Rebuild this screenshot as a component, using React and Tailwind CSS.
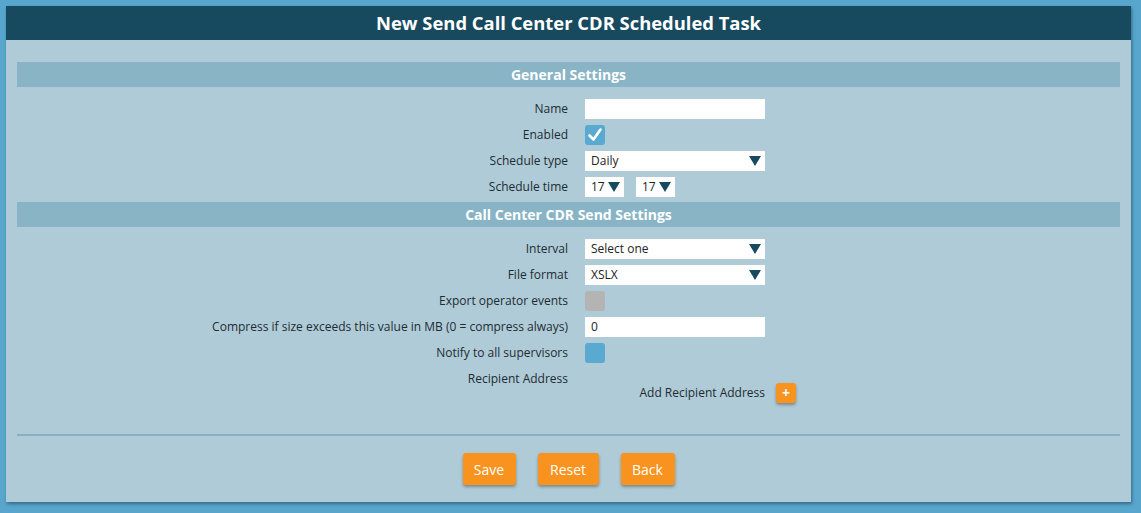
import React from "react";

const F = { fontFamily: '"Open Sans", "Noto Sans", sans-serif' };

function Arrow() {
  return (
    <svg width="12" height="10" viewBox="0 0 12 10" className="shrink-0">
      <polygon points="0,0 12,0 6,10" fill="#174a5e" />
    </svg>
  );
}

function Row({ label, children, h = "h-[26px]" }) {
  return (
    <div className={`grid grid-cols-[551px_1fr] ${h} items-center`}>
      <div className="text-right text-[12px] text-[#1e2b33] leading-none">{label}</div>
      <div className="pl-[17px] flex items-center">{children}</div>
    </div>
  );
}

function Input({ value = "" }) {
  return (
    <div className="w-[180px] h-[20px] bg-white text-[12px] text-[#222] flex items-center px-[6px]">{value}</div>
  );
}

function Select({ value, w = "w-[180px]" }) {
  return (
    <div className={`${w} h-[20px] bg-white text-[12px] text-[#222] flex items-center justify-between pl-[6px] pr-[4px] overflow-hidden`}>
      <span>{value}</span>
      <Arrow />
    </div>
  );
}

function Check({ checked, color = "bg-[#5aa9d0]" }) {
  return (
    <div className={`w-[20px] h-[20px] rounded-[3px] ${color} flex items-center justify-center`}>
      {checked && (
        <svg width="16" height="16" viewBox="0 0 16 16">
          <path d="M2.5 8.5 L6.5 12.5 L13.5 2.5" stroke="white" strokeWidth="2.6" fill="none" strokeLinecap="round" strokeLinejoin="round" />
        </svg>
      )}
    </div>
  );
}

function Bar({ children }) {
  return (
    <div className="h-[25px] bg-[#88b4c6] flex items-center justify-center text-white font-bold text-[14px]">{children}</div>
  );
}

function Btn({ children, w }) {
  return (
    <button className={`${w} h-[32px] rounded-[3px] bg-[#f7931e] text-white text-[14px] shadow-[0_2px_3px_rgba(60,60,60,0.45)]`}>{children}</button>
  );
}

export default function App() {
  return (
    <div className="w-[1141px] h-[513px] bg-[#58a6cd] p-[6px] pb-0" style={F}>
      <div className="w-[1125px] h-[496px] bg-[#afcbd7] shadow-[1px_2px_3px_rgba(20,50,70,0.5)] flex flex-col">
        <div className="h-[34px] bg-[#174a5e] flex items-center justify-center text-white font-bold text-[18.4px]">
          New Send Call Center CDR Scheduled Task
        </div>
        <div className="px-[11px] pt-[22px] flex flex-col">
          <Bar>General Settings</Bar>
          <div className="pt-[9px]">
            <Row label="Name"><Input /></Row>
            <Row label="Enabled"><Check checked /></Row>
            <Row label="Schedule type"><Select value="Daily" /></Row>
            <Row label="Schedule time">
              <div className="flex gap-[12px]">
                <Select value="17" w="w-[39px]" />
                <Select value="17" w="w-[39px]" />
              </div>
            </Row>
          </div>
          <div className="mt-[2px]"><Bar>Call Center CDR Send Settings</Bar></div>
          <div className="pt-[9px]">
            <Row label="Interval"><Select value="Select one" /></Row>
            <Row label="File format"><Select value="XSLX" /></Row>
            <Row label="Export operator events"><Check color="bg-[#b4b4b4]" /></Row>
            <Row label="Compress if size exceeds this value in MB (0 = compress always)"><Input value="0" /></Row>
            <Row label="Notify to all supervisors"><Check /></Row>
            <div className="grid grid-cols-[551px_1fr] h-[37px]">
              <div className="text-right text-[12px] text-[#1e2b33] leading-[26px]">Recipient Address</div>
              <div className="pl-[17px] pt-[17px] flex items-start">
                <div className="w-[180px] h-[20px] flex items-center justify-end text-[12px] text-[#1e2b33]">Add Recipient Address</div>
                <div className="ml-[11px] w-[20px] h-[20px] rounded-[3px] bg-[#f7931e] shadow-[0_2px_3px_rgba(60,60,60,0.45)] flex items-center justify-center text-white font-bold text-[14px] leading-none">+</div>
              </div>
            </div>
          </div>
          <div className="mt-[31px] h-[2px] bg-[#88b0c2]" />
          <div className="pt-[17px] flex justify-center gap-[22px]">
            <Btn w="w-[53px]">Save</Btn>
            <Btn w="w-[61px]">Reset</Btn>
            <Btn w="w-[54px]">Back</Btn>
          </div>
        </div>
      </div>
    </div>
  );
}
